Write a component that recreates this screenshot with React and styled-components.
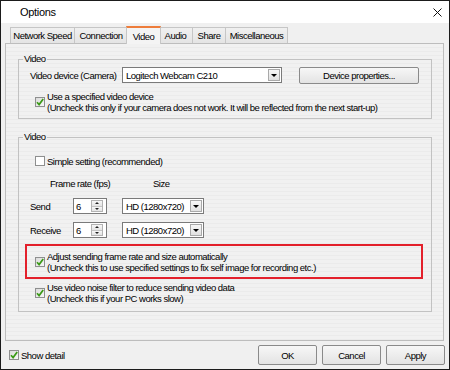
import React from 'react'
import styled, { createGlobalStyle } from 'styled-components'

const GlobalStyle = createGlobalStyle`
  html, body { margin: 0; padding: 0; background: #fff; }
  body {
    font-family: "Liberation Sans", Arial, sans-serif;
    font-size: 9.5px;
    letter-spacing: -0.5px;
    color: #000;
  }
  * { box-sizing: border-box; }
`

const Window = styled.div`
  width: 450px;
  height: 370px;
  border: 1px solid #1b1b1b;
  background: #f0f0f0;
  display: flex;
  flex-direction: column;
`
const TitleBar = styled.div`
  height: 22px;
  flex: 0 0 22px;
  background: #fff;
  display: flex;
  align-items: center;
  justify-content: space-between;
  padding: 0 7px 0 19px;
  font-size: 11px;
  letter-spacing: -0.3px;
`
const Body = styled.div`
  padding: 0 5px 0 4px;
`
const TabStrip = styled.div`
  height: 20px;
  display: flex;
  align-items: flex-end;
  padding-left: 5px;
`
const Tab = styled.div`
  width: ${p => p.$w}px;
  height: ${p => (p.$active ? 18 : 16)}px;
  margin: ${p => (p.$active ? '0 -2px -1px -2px' : '0 0 0 -1px')};
  position: relative;
  z-index: ${p => (p.$active ? 1 : 0)};
  display: flex;
  align-items: center;
  justify-content: center;
  border: 1px solid #c6c6c6;
  border-bottom: none;
  border-top: ${p => (p.$active ? '2px solid #ee7d3b' : '1px solid #c6c6c6')};
  background: ${p => (p.$active ? '#f4f4f4' : 'linear-gradient(#f0f0f0, #e4e4e4)')};
  &:first-child { margin-left: 0; }
`
const Panel = styled.div`
  height: 298px;
  border: 1px solid #bdbdbd;
  background: repeating-linear-gradient(#f1f1f1 0 3px, #ebebeb 3px 4px);
  padding: 9px 11px 0 12px;
`
const Group = styled.fieldset`
  margin: 0 0 ${p => p.$mb || 0}px 0;
  padding: 0 0 ${p => p.$pb}px 11px;
  border: 1px solid #c2c2c2;
  min-width: 0;
`
const Legend = styled.legend`
  padding: 0 1px;
  margin-left: -7px;
  line-height: 12px;
`
const Row = styled.div`
  display: flex;
  align-items: center;
  height: ${p => p.$h}px;
  margin-top: ${p => p.$mt}px;
`
const Label = styled.span`
  width: ${p => p.$w}px;
  margin-left: ${p => p.$ml || 0}px;
  flex-shrink: 0;
`
const Select = styled.div`
  width: ${p => p.$w}px;
  height: 16px;
  border: 1px solid #7a7a7a;
  background: #fff;
  display: flex;
  align-items: center;
  padding: 0 1px 0 3px;
`
const DropArrow = styled.span`
  margin-left: auto;
  width: 12px;
  height: 12px;
  border: 1px solid #a9a9a9;
  background: linear-gradient(#f7f7f7, #e1e1e1);
  display: flex;
  align-items: center;
  justify-content: center;
  &::after {
    content: '';
    border-left: 3px solid transparent;
    border-right: 3px solid transparent;
    border-top: 3px solid #000;
  }
`
const Spin = styled.div`
  width: 34px;
  height: 16px;
  border: 1px solid #7a7a7a;
  background: #fff;
  display: flex;
  align-items: center;
  padding: 0 3px 0 2px;
  margin-right: 15px;
`
const SpinButtons = styled.div`
  margin-left: auto;
  width: 12px;
  height: 12px;
  border: 1px solid #b3b3b3;
  display: flex;
  flex-direction: column;
`
const SpinHalf = styled.span`
  flex: 1;
  background: linear-gradient(#f7f7f7, #e4e4e4);
  display: flex;
  align-items: center;
  justify-content: center;
  border-top: ${p => (p.$down ? '1px solid #c4c4c4' : 'none')};
  &::after {
    content: '';
    border-left: 2px solid transparent;
    border-right: 2px solid transparent;
    ${p => (p.$down ? 'border-top: 2px solid #222;' : 'border-bottom: 2px solid #222;')}
  }
`
const Button = styled.div`
  width: ${p => p.$w}px;
  height: ${p => p.$h}px;
  border: 1px solid #8a8a8a;
  border-radius: 2px;
  background: linear-gradient(#f7f7f7, #e3e3e3);
  display: flex;
  align-items: center;
  justify-content: center;
  margin-left: ${p => p.$ml || 0}px;
`
const Check = styled.div`
  display: flex;
  align-items: center;
  gap: 2px;
  margin: ${p => p.$mt || 0}px 0 0 ${p => p.$ml ?? 5}px;
  line-height: 11px;
`
const Box = styled.span`
  width: 10px;
  height: 10px;
  flex-shrink: 0;
  border: 1px solid #8e8f8f;
  background: ${p => (p.$on ? 'linear-gradient(135deg, #dadada, #f8f8f8)' : '#fff')};
  display: flex;
  align-items: center;
  justify-content: center;
`
const HighlightBox = styled.div`
  height: 35px;
  margin: 6px 8px 0 -5px;
  border: 2px solid #e3202b;
  display: flex;
  align-items: center;
  padding-left: 3px;
`
const Footer = styled.div`
  flex: 1;
  display: flex;
  align-items: center;
  padding: 0 4px 0 8px;
`
const Buttons = styled.div`
  margin-left: auto;
  display: flex;
  gap: 5px;
`

function CheckBox({ on, children, mt, ml }) {
  return (
    <Check $mt={mt} $ml={ml}>
      <Box $on={on}>
        {on && (
          <svg width="8" height="8" viewBox="0 0 8 8">
            <path d="M1 4.2 L3.1 6.6 L7.2 1" fill="none" stroke="#3a9a16" strokeWidth="1.7" />
          </svg>
        )}
      </Box>
      <div>{children}</div>
    </Check>
  )
}

function Dropdown({ w, value }) {
  return (
    <Select $w={w}>
      <span>{value}</span>
      <DropArrow />
    </Select>
  )
}

function Spinner({ value }) {
  return (
    <Spin>
      <span>{value}</span>
      <SpinButtons>
        <SpinHalf />
        <SpinHalf $down />
      </SpinButtons>
    </Spin>
  )
}

const tabs = [
  { name: 'Network Speed', w: 65 },
  { name: 'Connection', w: 54 },
  { name: 'Video', w: 35 },
  { name: 'Audio', w: 35 },
  { name: 'Share', w: 34 },
  { name: 'Miscellaneous', w: 63 },
]

export default function App() {
  return (
    <>
      <GlobalStyle />
      <Window>
        <TitleBar>
          <span>Options</span>
          <svg width="9" height="9" viewBox="0 0 9 9">
            <path d="M0.5 0.5 L8.5 8.5 M8.5 0.5 L0.5 8.5" stroke="#111" strokeWidth="1" />
          </svg>
        </TitleBar>
        <Body>
          <TabStrip>
            {tabs.map(t => (
              <Tab key={t.name} $w={t.w} $active={t.name === 'Video'}>{t.name}</Tab>
            ))}
          </TabStrip>
          <Panel>
            <Group $pb={5} $mb={12}>
              <Legend>Video</Legend>
              <Row $h={18} $mt={1}>
                <Label $w={92}>Video device (Camera)</Label>
                <Dropdown w={160} value="Logitech Webcam C210" />
                <Button $w={120} $h={17} $ml={17}>Device properties...</Button>
              </Row>
              <CheckBox on mt={7}>
                Use a specified video device<br />
                (Uncheck this only if your camera does not work. It will be reflected from the next start-up)
              </CheckBox>
            </Group>
            <Group $pb={7}>
              <Legend>Video</Legend>
              <Row $h={12} $mt={12}>
                <CheckBox ml={5}>Simple setting (recommended)</CheckBox>
              </Row>
              <Row $h={12} $mt={10}>
                <Label $w={103} $ml={20}>Frame rate (fps)</Label>
                <Label $w={30}>Size</Label>
              </Row>
              <Row $h={16} $mt={9}>
                <Label $w={43}>Send</Label>
                <Spinner value="6" />
                <Dropdown w={82} value="HD (1280x720)" />
              </Row>
              <Row $h={16} $mt={8}>
                <Label $w={43}>Receive</Label>
                <Spinner value="6" />
                <Dropdown w={82} value="HD (1280x720)" />
              </Row>
              <HighlightBox>
                <CheckBox on>
                  Adjust sending frame rate and size automatically<br />
                  (Uncheck this to use specified settings to fix self image for recording etc.)
                </CheckBox>
              </HighlightBox>
              <CheckBox on mt={3}>
                Use video noise filter to reduce sending video data<br />
                (Uncheck this if your PC works slow)
              </CheckBox>
            </Group>
          </Panel>
        </Body>
        <Footer>
          <CheckBox on ml={0}>Show detail</CheckBox>
          <Buttons>
            <Button $w={59} $h={20}>OK</Button>
            <Button $w={59} $h={20}>Cancel</Button>
            <Button $w={59} $h={20}>Apply</Button>
          </Buttons>
        </Footer>
      </Window>
    </>
  )
}
